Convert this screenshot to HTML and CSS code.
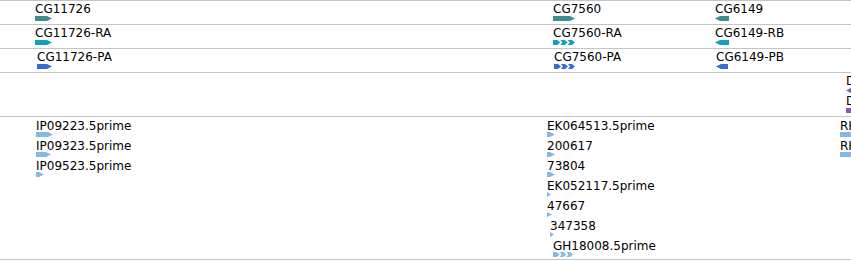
FILE: index.html
```html
<!DOCTYPE html>
<html lang="en">
<head>
  <meta charset="UTF-8">
  <title>Tracks</title>
  <link rel="stylesheet" href="styles.css">
</head>
<body>

<div class="tracks">
  <div class="track gene-track" id="genes"></div>
  <div class="track gene-track" id="transcripts"></div>
  <div class="track gene-track" id="proteins"></div>
  <div class="track other-track" id="other"></div>
  <div class="track est-track" id="ests"></div>
</div>

<script>
  // features: x = start pixel, w = width, row = stacking level
  const tracks = {
    genes: [
      { label: 'CG11726', x: 35, w: 17, row: 0, dir: 1, cls: 'gene' },
      { label: 'CG7560', x: 553, w: 22, row: 0, dir: 1, cls: 'gene' },
      { label: 'CG6149', x: 715, w: 14, row: 0, dir: -1, cls: 'gene' }
    ],
    transcripts: [
      { label: 'CG11726-RA', x: 35, w: 17, row: 0, dir: 1, cls: 'mrna' },
      { label: 'CG7560-RA', x: 553, w: 22, row: 0, dir: 1, cls: 'mrna', exons: 3 },
      { label: 'CG6149-RB', x: 715, w: 14, row: 0, dir: -1, cls: 'mrna' }
    ],
    proteins: [
      { label: 'CG11726-PA', x: 37, w: 15, row: 0, dir: 1, cls: 'cds' },
      { label: 'CG7560-PA', x: 554, w: 21, row: 0, dir: 1, cls: 'cds', exons: 3 },
      { label: 'CG6149-PB', x: 716, w: 12, row: 0, dir: -1, cls: 'cds' }
    ],
    other: [
      { label: 'DRSC', x: 846, w: 10, row: 0, dir: -1, cls: 'probe' },
      { label: 'DRSC', x: 846, w: 10, row: 1, dir: 1, cls: 'probe' }
    ],
    ests: [
      { label: 'IP09223.5prime', x: 36, w: 17, row: 0, dir: 1, cls: 'est' },
      { label: 'IP09323.5prime', x: 36, w: 15, row: 1, dir: 1, cls: 'est' },
      { label: 'IP09523.5prime', x: 36, w: 8, row: 2, dir: 1, cls: 'est' },
      { label: 'EK064513.5prime', x: 547, w: 8, row: 0, dir: 1, cls: 'est' },
      { label: '200617', x: 547, w: 8, row: 1, dir: 1, cls: 'est' },
      { label: '73804', x: 547, w: 8, row: 2, dir: 1, cls: 'est' },
      { label: 'EK052117.5prime', x: 547, w: 4, row: 3, dir: 1, cls: 'est' },
      { label: '47667', x: 547, w: 5, row: 4, dir: 1, cls: 'est' },
      { label: '347358', x: 550, w: 4, row: 5, dir: 1, cls: 'est' },
      { label: 'GH18008.5prime', x: 553, w: 20, row: 6, dir: 1, cls: 'est', exons: 3 },
      { label: 'RH12345.5prime', x: 840, w: 16, row: 0, dir: 1, cls: 'est' },
      { label: 'RH23456.5prime', x: 840, w: 16, row: 1, dir: 1, cls: 'est' }
    ]
  };

  // arrow shaped box, pointing by strand
  function arrowPoints(w, dir) {
    const t = Math.min(5, w);
    if (dir < 0) return `0,2.5 ${t},0 ${w},0 ${w},5 ${t},5`;
    return `0,0 ${w - t},0 ${w},2.5 ${w - t},5 0,5`;
  }

  // chain of chevrons for spliced features
  function exonPath(w, n) {
    const step = w / n;
    let d = '';
    for (let i = 0; i < n; i++) {
      const o = i * step;
      const end = o + step;
      const notch = i === 0 ? 0 : 2;
      d += `M${o},0 L${end - 3},0 L${end},2.5 L${end - 3},5 L${o},5 L${o + notch},2.5 Z `;
    }
    return d;
  }

  Object.keys(tracks).forEach((id) => {
    const el = document.getElementById(id);
    tracks[id].forEach((f) => {
      const div = document.createElement('div');
      div.className = 'feature ' + f.cls;
      div.style.left = f.x + 'px';
      div.style.top = (f.row * 20) + 'px';
      const shape = f.exons
        ? `<path d="${exonPath(f.w, f.exons)}"/>`
        : `<polygon points="${arrowPoints(f.w, f.dir)}"/>`;
      div.innerHTML = `
        <span class="label">${f.label}</span>
        <svg class="glyph" width="${f.w}" height="5" viewBox="0 0 ${f.w} 5">${shape}</svg>
      `;
      el.appendChild(div);
    });
  });
</script>

</body>
</html>
```

FILE: styles.css
```css
html, body {
  margin: 0;
  padding: 0;
  background-color: #fff;
  overflow: hidden;
}
.tracks {
  width: 851px;
  font-family: 'DejaVu Sans', Verdana, sans-serif;
  font-size: 12px;
  color: #000;
}
.track {
  position: relative;
  overflow: hidden;
  border-top: 1px solid #c4c4c4;
}
.gene-track {
  height: 23px;
}
.other-track {
  height: 43px;
}
.est-track {
  height: 142px;
  border-bottom: 1px solid #c4c4c4;
}
.feature {
  position: absolute;
  margin-top: 1px;
}
.est-track .feature {
  margin-top: 2px;
}
.label {
  display: block;
  line-height: 14px;
  white-space: nowrap;
}
.est-track .label {
  margin-bottom: -1px;
}
.glyph {
  display: block;
}
.gene .glyph { fill: #3f8e8f; }
.mrna .glyph { fill: #12a1bc; }
.cds .glyph { fill: #366ccd; }
.probe .glyph { fill: #7a5cb9; }
.est .glyph { fill: #86b9e1; }
```
